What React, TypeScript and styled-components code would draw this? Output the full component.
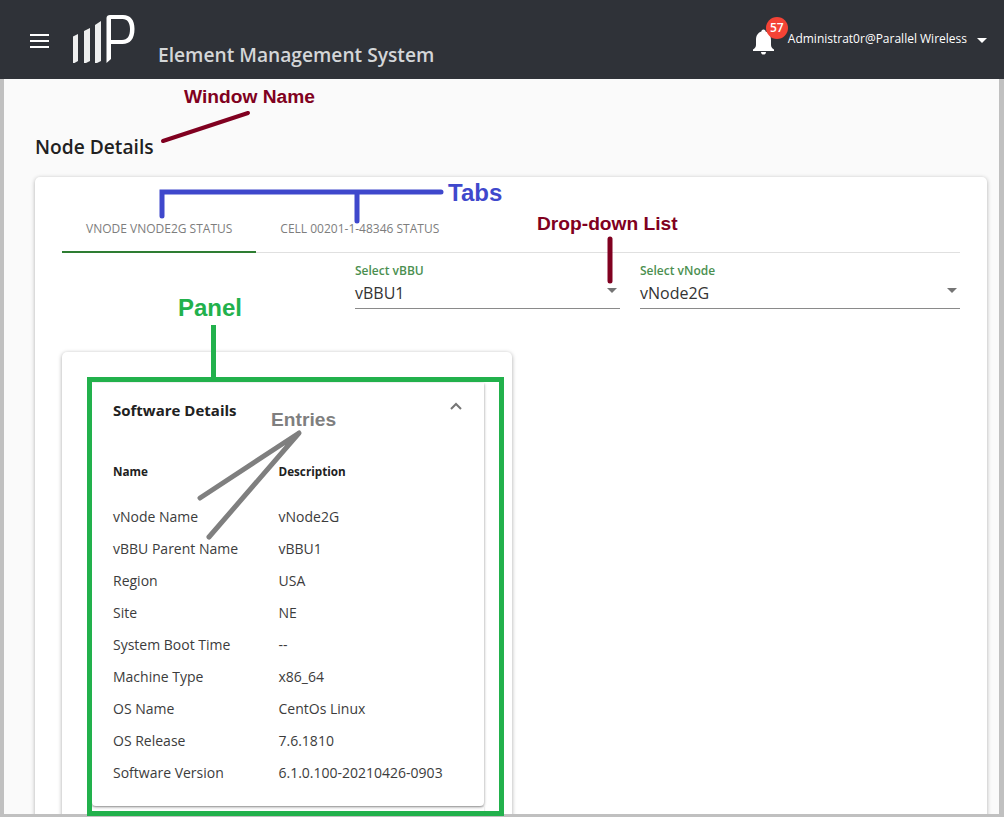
import React from "react"
import styled, { createGlobalStyle } from "styled-components"

const GlobalStyle = createGlobalStyle`
  html, body {
    margin: 0;
    padding: 0;
    background: #fafafa;
  }
  body {
    font-family: "Open Sans", "Liberation Sans", sans-serif;
    color: #212121;
  }
`

const Page = styled.div`
  position: relative;
  width: 1004px;
  height: 817px;
  overflow: hidden;
  display: flex;
  flex-direction: column;
`

const TopBar = styled.header`
  flex: none;
  height: 79px;
  background: #2f3238;
  display: flex;
  color: #fff;
`

const MenuButton = styled.div`
  width: 19px;
  margin: 34px 0 0 30px;
  display: flex;
  flex-direction: column;
  gap: 4px;
  span {
    display: block;
    height: 2px;
    background: #fff;
  }
`

const Logo = styled.svg`
  margin: 14px 0 0 24px;
  flex: none;
`

const Product = styled.div`
  margin: 42px 0 0 23px;
  font-size: 19.2px;
  font-weight: 600;
  line-height: 26px;
  color: #d4d6d8;
`

const UserArea = styled.div`
  margin-left: auto;
  padding: 29px 17px 0 0;
  display: flex;
  align-items: flex-start;
`

const BellWrap = styled.div`
  position: relative;
  width: 25px;
  height: 26px;
  margin-right: 12px;
  svg {
    display: block;
  }
`

const Badge = styled.span`
  position: absolute;
  left: 15px;
  top: -12px;
  width: 22px;
  height: 22px;
  border-radius: 50%;
  background: #f44336;
  color: #fff;
  font-size: 12px;
  font-weight: 600;
  line-height: 22px;
  text-align: center;
`

const UserName = styled.span`
  font-size: 12px;
  line-height: 20px;
  color: #fff;
`

const UserCaret = styled.i`
  width: 0;
  height: 0;
  margin: 9px 0 0 10px;
  border-left: 5px solid transparent;
  border-right: 5px solid transparent;
  border-top: 5px solid #fff;
`

const Content = styled.main`
  flex: 1;
  min-height: 0;
  background: #fafafa;
  border-left: 4px solid #c0c0c0;
  border-right: 5px solid #c0c0c0;
  border-bottom: 3px solid #c0c0c0;
  padding: 0 12px 0 31px;
  overflow: hidden;
`

const WindowTitle = styled.h1`
  margin: 55px 0 17px;
  font-size: 19.2px;
  font-weight: 600;
  line-height: 26px;
  color: #212121;
`

const MainCard = styled.section`
  background: #fff;
  border-radius: 5px;
  box-shadow: 0 1px 4px rgba(0, 0, 0, 0.3);
  padding: 23px 27px 0;
  height: 700px;
`

const TabRow = styled.div`
  display: flex;
  height: 52px;
  border-bottom: 1px solid #e0e0e0;
`

const Tab = styled.div<{ $active?: boolean }>`
  padding: 0 24px;
  height: 53px;
  box-sizing: border-box;
  font-size: 12px;
  line-height: 57px;
  text-transform: uppercase;
  white-space: nowrap;
  color: #7d7d7d;
  border-bottom: 2px solid ${({ $active }) => ($active ? "#2e7d32" : "transparent")};
`

const SelectRow = styled.div`
  display: flex;
  gap: 20px;
  padding: 10px 0 0 293px;
`

const SelectField = styled.div<{ $width: number }>`
  position: relative;
  width: ${({ $width }) => $width}px;
  height: 46px;
  box-sizing: border-box;
  border-bottom: 1px solid #8a8a8a;
`

const SelectLabel = styled.div`
  font-size: 12px;
  font-weight: 600;
  line-height: 16px;
  color: #4b8f50;
`

const SelectValue = styled.div`
  font-size: 16px;
  line-height: 29px;
  color: #333;
`

const SelectCaret = styled.i`
  position: absolute;
  right: 3px;
  top: 25px;
  width: 0;
  height: 0;
  border-left: 5px solid transparent;
  border-right: 5px solid transparent;
  border-top: 5px solid #757575;
`

const OuterPanel = styled.div`
  width: 450px;
  height: 600px;
  margin-top: 43px;
  padding: 31px 28px 0 30px;
  box-sizing: border-box;
  background: #fff;
  border-radius: 5px;
  box-shadow: 0 1px 4px rgba(0, 0, 0, 0.35);
`

const DetailsPanel = styled.div`
  position: relative;
  height: 423px;
  box-sizing: border-box;
  padding: 18px 21px 0;
  background: #fff;
  border-radius: 0 0 4px 4px;
  box-shadow: 0 1px 3px rgba(0, 0, 0, 0.45);
`

const PanelTitle = styled.h2`
  margin: 0 0 42px;
  font-size: 15px;
  font-weight: 700;
  line-height: 19px;
  color: #212121;
`

const Chevron = styled.svg`
  position: absolute;
  right: 21px;
  top: 18px;
`

const DetailRow = styled.div<{ $head?: boolean }>`
  display: grid;
  grid-template-columns: 165.5px 1fr;
  height: ${({ $head }) => ($head ? "39px" : "32px")};
  font-size: ${({ $head }) => ($head ? "11.7px" : "14px")};
  font-weight: ${({ $head }) => ($head ? 700 : 400)};
  line-height: ${({ $head }) => ($head ? "18px" : "32px")};
  color: ${({ $head }) => ($head ? "#212121" : "#3c3c3c")};
  white-space: nowrap;
`

const NextPanelEdge = styled.div`
  height: 6px;
  margin-top: 1px;
  background: #fff;
  box-shadow: 0 0 2px rgba(0, 0, 0, 0.25);
`

const Callout = styled.span<{ $color: string; $size: number; $x: number; $y: number }>`
  position: absolute;
  left: ${({ $x }) => $x}px;
  top: ${({ $y }) => $y}px;
  font-family: "Liberation Sans", Arial, sans-serif;
  font-weight: 700;
  font-size: ${({ $size }) => $size}px;
  line-height: 1;
  white-space: nowrap;
  color: ${({ $color }) => $color};
`

const CalloutLines = styled.svg`
  position: absolute;
  left: 0;
  top: 0;
  pointer-events: none;
`

const rows = [
  ["vNode Name", "vNode2G"],
  ["vBBU Parent Name", "vBBU1"],
  ["Region", "USA"],
  ["Site", "NE"],
  ["System Boot Time", "--"],
  ["Machine Type", "x86_64"],
  ["OS Name", "CentOs Linux"],
  ["OS Release", "7.6.1810"],
  ["Software Version", "6.1.0.100-20210426-0903"],
]

export default function App() {
  return (
    <Page>
      <GlobalStyle />
      <TopBar>
        <MenuButton>
          <span />
          <span />
          <span />
        </MenuButton>
        <Logo width="62" height="50" viewBox="0 0 62 50" fill="#fff">
          <path d="M0 22.5 L5 20 L5 47 L1.5 49 L0 49 Z" opacity="0.92" />
          <path d="M11 17 L17 14 L17 47 L13 49 L11 49 Z" opacity="0.92" />
          <path d="M22 11 L28 7 L28 47 L24 49 L22 49 Z" opacity="0.92" />
          <path d="M33.5 4 C33.5 2 35 1 37 1 L50 1 C57.5 1 61.5 6 61.5 15 C61.5 25 57 30 49.5 30 L38 30 L38 45 L33.5 49 Z M38 5 L38 26 L49 26 C54.5 26 57 22 57 15 C57 9 54.5 5 49.5 5 Z" fillRule="evenodd" />
        </Logo>
        <Product>Element Management System</Product>
        <UserArea>
          <BellWrap>
            <svg width="25" height="26" viewBox="0 0 25 26" fill="#fff">
              <path d="M12.5 0.5 C14 0.5 14.6 1.6 14.6 2.6 C18.4 3.8 20 7 20 11 L20 16 C20 18 21.5 19.5 23 20.5 L23 22 L2 22 L2 20.5 C3.5 19.5 5 18 5 16 L5 11 C5 7 6.6 3.8 10.4 2.6 C10.4 1.6 11 0.5 12.5 0.5 Z" />
              <path d="M10 23 L15 23 C15 24.6 13.8 25.6 12.5 25.6 C11.2 25.6 10 24.6 10 23 Z" />
            </svg>
            <Badge>57</Badge>
          </BellWrap>
          <UserName>Administrat0r@Parallel Wireless</UserName>
          <UserCaret />
        </UserArea>
      </TopBar>

      <Content>
        <WindowTitle>Node Details</WindowTitle>
        <MainCard>
          <TabRow>
            <Tab $active>vNode vNode2G Status</Tab>
            <Tab>Cell 00201-1-48346 Status</Tab>
          </TabRow>
          <SelectRow>
            <SelectField $width={265}>
              <SelectLabel>Select vBBU</SelectLabel>
              <SelectValue>vBBU1</SelectValue>
              <SelectCaret />
            </SelectField>
            <SelectField $width={320}>
              <SelectLabel>Select vNode</SelectLabel>
              <SelectValue>vNode2G</SelectValue>
              <SelectCaret />
            </SelectField>
          </SelectRow>
          <OuterPanel>
            <DetailsPanel>
              <PanelTitle>Software Details</PanelTitle>
              <Chevron width="14" height="10" viewBox="0 0 14 10" fill="none" stroke="#757575" strokeWidth="2">
                <path d="M2 8 L7 3 L12 8" />
              </Chevron>
              <DetailRow $head>
                <span>Name</span>
                <span>Description</span>
              </DetailRow>
              {rows.map(([name, value]) => (
                <DetailRow key={name}>
                  <span>{name}</span>
                  <span>{value}</span>
                </DetailRow>
              ))}
            </DetailsPanel>
            <NextPanelEdge />
          </OuterPanel>
        </MainCard>
      </Content>

      {/* annotations drawn on top of the screenshot */}
      <CalloutLines width="1004" height="817" viewBox="0 0 1004 817" fill="none" strokeLinecap="round">
        <path d="M163 141 L248 113" stroke="#800020" strokeWidth="4" />
        <path d="M162 216 L162 192 L441 192 M357 192 L357 221" stroke="#3f48cc" strokeWidth="5" />
        <path d="M610 239 L610 281" stroke="#800020" strokeWidth="5" />
        <path d="M213.5 325 L213.5 378" stroke="#22b14c" strokeWidth="5" strokeLinecap="butt" />
        <rect x="89.5" y="379.5" width="412" height="434" stroke="#22b14c" strokeWidth="5" />
        <path d="M200 498 L299 433 L209 537" stroke="#7f7f7f" strokeWidth="5" strokeLinejoin="round" />
      </CalloutLines>
      <Callout $color="#800020" $size={19.2} $x={184} $y={87}>Window Name</Callout>
      <Callout $color="#3f48cc" $size={24} $x={448} $y={181}>Tabs</Callout>
      <Callout $color="#800020" $size={19.2} $x={537} $y={214}>Drop-down List</Callout>
      <Callout $color="#22b14c" $size={24} $x={178} $y={296}>Panel</Callout>
      <Callout $color="#7f7f7f" $size={19.2} $x={271} $y={410}>Entries</Callout>
    </Page>
  )
}
